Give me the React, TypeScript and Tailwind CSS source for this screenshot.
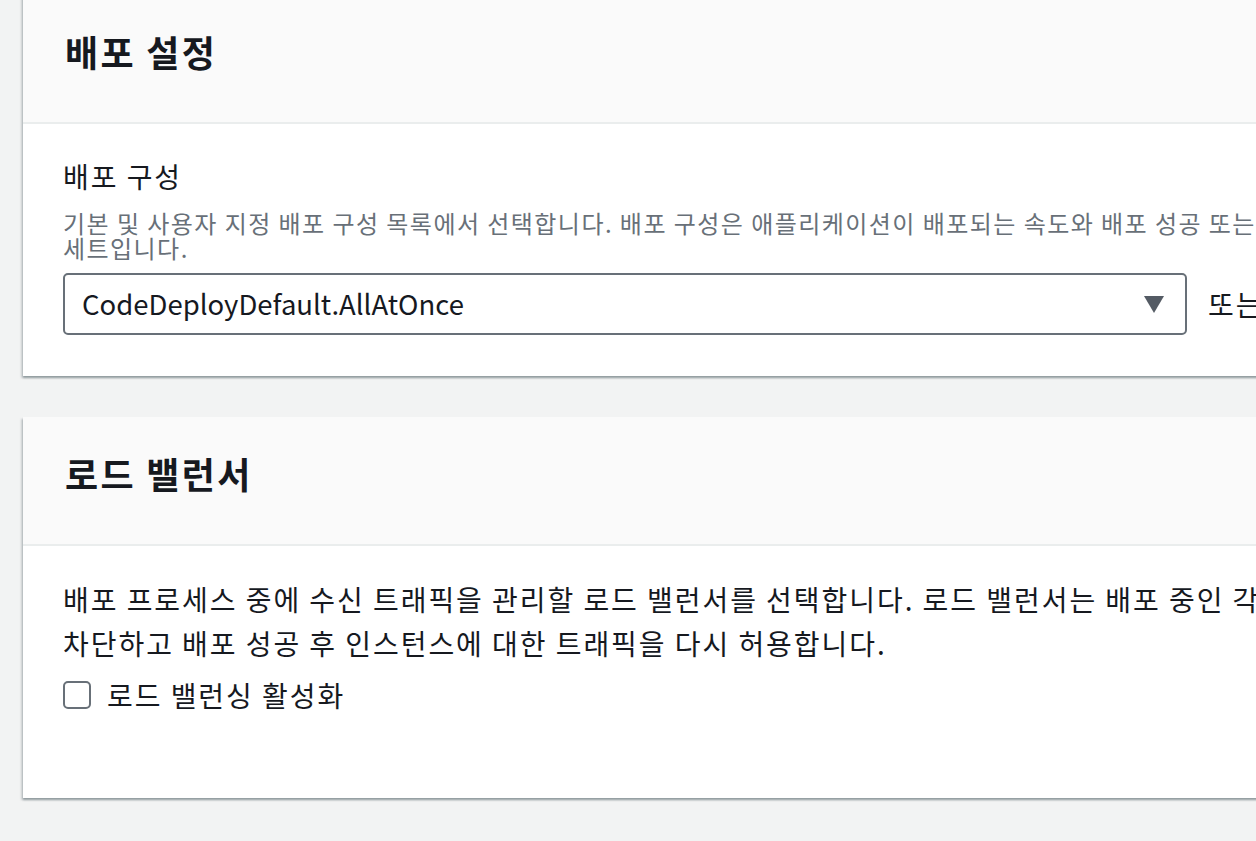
import React from "react";

function CaretDown() {
  return (
    <svg width="20" height="17" viewBox="0 0 20 17" className="shrink-0">
      <polygon points="0,0 20,0 10,17" fill="#545b64" />
    </svg>
  );
}

function CardHeader({ title }: { title: string }) {
  return (
    <div className="h-[129px] shrink-0 bg-[#fafafa] border-b-2 border-[#eaeded] px-[42px] pb-[16px] flex items-center">
      <h2 className="text-[36px] leading-[44px] font-bold tracking-[2.3px]">{title}</h2>
    </div>
  );
}

export default function App() {
  return (
    <div className="min-h-screen w-full overflow-hidden bg-[#f2f3f3] text-[#16191f] font-['Noto_Sans_CJK_KR',sans-serif] tracking-[1.95px] break-keep">
      <div className="-mt-[5px] ml-[23px] w-[1657px] flex flex-col gap-[41px]">
        {/* 배포 설정 */}
        <section className="bg-white shadow-[0_2px_2px_0_rgba(0,28,36,0.3),-2px_2px_2px_0_rgba(0,28,36,0.15)]">
          <CardHeader title="배포 설정" />
          <div className="h-[252px] px-[40px] pt-[30px]">
            <div className="text-[28px] leading-[44px]">배포 구성</div>
            <p className="mt-[12px] text-[24px] leading-[25px] tracking-[1.45px] text-[#687078]">
              기본 및 사용자 지정 배포 구성 목록에서 선택합니다. 배포 구성은 애플리케이션이 배포되는 속도와 배포 성공 또는 실패 조건을 결정하는 규칙 세트입니다.
            </p>
            <div className="mt-[13px] flex items-center gap-[21px]">
              <div className="w-[1124px] h-[62px] border-2 border-[#687078] rounded-[5px] flex items-center justify-between pl-[17px] pr-[21px]">
                <span className="text-[27.5px] tracking-normal">CodeDeployDefault.AllAtOnce</span>
                <CaretDown />
              </div>
              <span className="text-[28px]">또는</span>
            </div>
          </div>
        </section>

        {/* 로드 밸런서 */}
        <section className="bg-white shadow-[0_2px_2px_0_rgba(0,28,36,0.3),-2px_2px_2px_0_rgba(0,28,36,0.15)]">
          <CardHeader title="로드 밸런서" />
          <div className="h-[252px] px-[40px] pt-[31px]">
            <p className="text-[28px] leading-[44px]">
              배포 프로세스 중에 수신 트래픽을 관리할 로드 밸런서를 선택합니다. 로드 밸런서는 배포 중인 각 인스턴스에 대한 트래픽을 차단하고 배포 성공 후 인스턴스에 대한 트래픽을 다시 허용합니다.
            </p>
            <label className="mt-[8px] flex items-center gap-[16px] h-[44px]">
              <span className="w-[28px] h-[28px] border-2 border-[#687078] rounded-[5px] bg-white shrink-0" />
              <span className="text-[28px] leading-[44px]">로드 밸런싱 활성화</span>
            </label>
          </div>
        </section>
      </div>
    </div>
  );
}
